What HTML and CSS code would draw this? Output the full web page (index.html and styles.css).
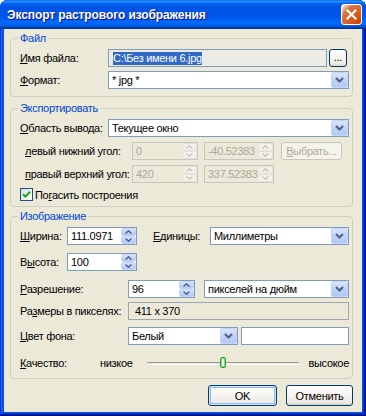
FILE: index.html
```html
<!DOCTYPE html>
<html>
<head>
  <meta charset="UTF-8">
  <title>Экспорт растрового изображения</title>
  <link rel="stylesheet" href="styles.css">
</head>
<body>
  <div class="window">
    <div class="titlebar">
      <span class="title">Экспорт растрового изображения</span>
      <span class="close-btn">
        <svg width="13" height="13" viewBox="0 0 13 13"><path d="M2.5 2.5 L10.5 10.5 M10.5 2.5 L2.5 10.5" stroke="#fff" stroke-width="2.2" stroke-linecap="square"/></svg>
      </span>
    </div>

    <div class="client">
      <!-- File -->
      <fieldset class="group group-file">
        <legend>Файл</legend>
        <div class="row">
          <label class="lbl w88"><u>И</u>мя файла:</label>
          <div class="edit edit-readonly grow"><span class="selection">C:\Без имени 6.jpg</span></div>
          <button class="btn btn-browse">...</button>
        </div>
        <div class="row mt4">
          <label class="lbl w88"><u>Ф</u>ормат:</label>
          <div class="combo grow">
            <span class="combo-text">* jpg *</span>
            <span class="combo-arrow"><svg width="9" height="6" viewBox="0 0 9 6"><path d="M1 1 L4.5 4.5 L8 1" fill="none" stroke="#4D6185" stroke-width="2"/></svg></span>
          </div>
        </div>
      </fieldset>

      <!-- Export area -->
      <fieldset class="group group-export">
        <legend>Экспортировать</legend>
        <div class="row">
          <label class="lbl w88"><u>О</u>бласть вывода:</label>
          <div class="combo grow">
            <span class="combo-text">Текущее окно</span>
            <span class="combo-arrow"><svg width="9" height="6" viewBox="0 0 9 6"><path d="M1 1 L4.5 4.5 L8 1" fill="none" stroke="#4D6185" stroke-width="2"/></svg></span>
          </div>
        </div>
        <div class="row mt5">
          <label class="lbl lbl-indent"><u>л</u>евый нижний угол:</label>
          <div class="spin disabled w66">
            <span class="spin-text">0</span>
            <span class="spin-btns">
              <span class="spin-btn"><svg width="7" height="4" viewBox="0 0 7 4"><path d="M0.5 3.5 L3.5 0.8 L6.5 3.5" fill="none" stroke="currentColor" stroke-width="1.4"/></svg></span>
              <span class="spin-btn"><svg width="7" height="4" viewBox="0 0 7 4"><path d="M0.5 0.5 L3.5 3.2 L6.5 0.5" fill="none" stroke="currentColor" stroke-width="1.4"/></svg></span>
            </span>
          </div>
          <div class="spin disabled w70 ml6">
            <span class="spin-text">-40.52383</span>
            <span class="spin-btns">
              <span class="spin-btn"><svg width="7" height="4" viewBox="0 0 7 4"><path d="M0.5 3.5 L3.5 0.8 L6.5 3.5" fill="none" stroke="currentColor" stroke-width="1.4"/></svg></span>
              <span class="spin-btn"><svg width="7" height="4" viewBox="0 0 7 4"><path d="M0.5 0.5 L3.5 3.2 L6.5 0.5" fill="none" stroke="currentColor" stroke-width="1.4"/></svg></span>
            </span>
          </div>
          <button class="btn btn-disabled btn-pick"><u>В</u>ыбрать...</button>
        </div>
        <div class="row mt5">
          <label class="lbl lbl-indent"><u>п</u>равый верхний угол:</label>
          <div class="spin disabled w66">
            <span class="spin-text">420</span>
            <span class="spin-btns">
              <span class="spin-btn"><svg width="7" height="4" viewBox="0 0 7 4"><path d="M0.5 3.5 L3.5 0.8 L6.5 3.5" fill="none" stroke="currentColor" stroke-width="1.4"/></svg></span>
              <span class="spin-btn"><svg width="7" height="4" viewBox="0 0 7 4"><path d="M0.5 0.5 L3.5 3.2 L6.5 0.5" fill="none" stroke="currentColor" stroke-width="1.4"/></svg></span>
            </span>
          </div>
          <div class="spin disabled w70 ml6">
            <span class="spin-text">337.52383</span>
            <span class="spin-btns">
              <span class="spin-btn"><svg width="7" height="4" viewBox="0 0 7 4"><path d="M0.5 3.5 L3.5 0.8 L6.5 3.5" fill="none" stroke="currentColor" stroke-width="1.4"/></svg></span>
              <span class="spin-btn"><svg width="7" height="4" viewBox="0 0 7 4"><path d="M0.5 0.5 L3.5 3.2 L6.5 0.5" fill="none" stroke="currentColor" stroke-width="1.4"/></svg></span>
            </span>
          </div>
        </div>
        <div class="row row-check mt5">
          <span class="checkbox"><svg width="9" height="9" viewBox="0 0 9 9"><path d="M1 4.2 L3.4 6.6 L8 1.8" fill="none" stroke="#21A121" stroke-width="2"/></svg></span>
          <label class="check-label">По<u>г</u>асить построения</label>
        </div>
      </fieldset>

      <!-- Image -->
      <fieldset class="group group-image">
        <legend>Изображение</legend>
        <div class="row">
          <label class="lbl w47"><u>Ш</u>ирина:</label>
          <div class="spin w70">
            <span class="spin-text">111.0971</span>
            <span class="spin-btns">
              <span class="spin-btn"><svg width="7" height="4" viewBox="0 0 7 4"><path d="M0.5 3.5 L3.5 0.8 L6.5 3.5" fill="none" stroke="currentColor" stroke-width="1.4"/></svg></span>
              <span class="spin-btn"><svg width="7" height="4" viewBox="0 0 7 4"><path d="M0.5 0.5 L3.5 3.2 L6.5 0.5" fill="none" stroke="currentColor" stroke-width="1.4"/></svg></span>
            </span>
          </div>
          <label class="lbl lbl-units w57"><u>Е</u>диницы:</label>
          <div class="combo grow">
            <span class="combo-text">Миллиметры</span>
            <span class="combo-arrow"><svg width="9" height="6" viewBox="0 0 9 6"><path d="M1 1 L4.5 4.5 L8 1" fill="none" stroke="#4D6185" stroke-width="2"/></svg></span>
          </div>
        </div>
        <div class="row mt8">
          <label class="lbl w47">В<u>ы</u>сота:</label>
          <div class="spin w70">
            <span class="spin-text">100</span>
            <span class="spin-btns">
              <span class="spin-btn"><svg width="7" height="4" viewBox="0 0 7 4"><path d="M0.5 3.5 L3.5 0.8 L6.5 3.5" fill="none" stroke="currentColor" stroke-width="1.4"/></svg></span>
              <span class="spin-btn"><svg width="7" height="4" viewBox="0 0 7 4"><path d="M0.5 0.5 L3.5 3.2 L6.5 0.5" fill="none" stroke="currentColor" stroke-width="1.4"/></svg></span>
            </span>
          </div>
        </div>
        <div class="row mt9">
          <label class="lbl w108"><u>Р</u>азрешение:</label>
          <div class="spin w67">
            <span class="spin-text">96</span>
            <span class="spin-btns">
              <span class="spin-btn"><svg width="7" height="4" viewBox="0 0 7 4"><path d="M0.5 3.5 L3.5 0.8 L6.5 3.5" fill="none" stroke="currentColor" stroke-width="1.4"/></svg></span>
              <span class="spin-btn"><svg width="7" height="4" viewBox="0 0 7 4"><path d="M0.5 0.5 L3.5 3.2 L6.5 0.5" fill="none" stroke="currentColor" stroke-width="1.4"/></svg></span>
            </span>
          </div>
          <div class="combo grow ml9">
            <span class="combo-text">пикселей на дюйм</span>
            <span class="combo-arrow"><svg width="9" height="6" viewBox="0 0 9 6"><path d="M1 1 L4.5 4.5 L8 1" fill="none" stroke="#4D6185" stroke-width="2"/></svg></span>
          </div>
        </div>
        <div class="row row-static mt4">
          <label class="lbl w108">Ра<u>з</u>меры в пикселях:</label>
          <div class="static-box grow">411 x 370</div>
        </div>
        <div class="row mt7">
          <label class="lbl w108"><u>Ц</u>вет фона:</label>
          <div class="combo w110">
            <span class="combo-text">Белый</span>
            <span class="combo-arrow"><svg width="9" height="6" viewBox="0 0 9 6"><path d="M1 1 L4.5 4.5 L8 1" fill="none" stroke="#4D6185" stroke-width="2"/></svg></span>
          </div>
          <div class="color-swatch grow"></div>
        </div>
        <div class="row row-quality mt10">
          <label class="lbl w80"><u>К</u>ачество:</label>
          <span class="slider-caption w47">низкое</span>
          <div class="slider">
            <div class="slider-track"></div>
            <div class="slider-thumb" style="left: 48%"></div>
          </div>
          <span class="slider-caption caption-high">высокое</span>
        </div>
      </fieldset>

      <div class="dialog-buttons">
        <button class="btn btn-default btn-ok">OK</button>
        <button class="btn btn-cancel">Отменить</button>
      </div>
    </div>
  </div>
</body>
</html>
```

FILE: styles.css
```css
/* Global styles */
* {
  margin: 0;
  padding: 0;
  box-sizing: border-box;
}

body {
  background-color: #ffffff;
  font-family: "Liberation Sans", Arial, sans-serif;
  font-size: 11px;
  letter-spacing: -0.3px;
  color: #000000;
}

/* Window frame */
.window {
  width: 366px;
  height: 416px;
  display: flex;
  flex-direction: column;
  padding: 0 4px 4px;
  background-color: #0855dd;
  border-radius: 8px 8px 0 0;
  overflow: hidden;
  box-shadow: inset -1px -1px #00138c, inset 1px 1px #0831d9,
    inset -2px -2px #001ea0, inset 2px 2px #166aee,
    inset -3px -3px #003bda, inset 3px 3px #0855dd;
}

.titlebar {
  height: 29px;
  margin: 0 -4px;
  padding: 0 4px 0 7px;
  display: flex;
  align-items: center;
  justify-content: space-between;
  background: linear-gradient(to bottom, #0058ee 0%, #3593ff 4%, #288eff 6%, #127dff 8%,
    #036ffc 10%, #0262ee 14%, #0057e5 20%, #0054e3 24%, #0055eb 56%, #005bf5 66%,
    #026afe 76%, #0062ef 86%, #0052d6 92%, #0040ab 94%, #003092 100%);
}

.title {
  color: #ffffff;
  font-weight: bold;
  font-size: 12px;
  letter-spacing: -0.1px;
  text-shadow: 1px 1px #0f1089;
}

.close-btn {
  width: 21px;
  height: 21px;
  border: 1px solid #ffffff;
  border-radius: 3px;
  display: flex;
  align-items: center;
  justify-content: center;
  background: radial-gradient(circle at 90% 90%, #cc4600 0%, #dc6527 55%, #cd7546 70%, #ffccb2 90%, #ffffff 100%);
}

/* Client area */
.client {
  flex: 1;
  background-color: #ece9d8;
  padding: 2px 9px 0 6px;
  display: flex;
  flex-direction: column;
}

.group {
  border: 1px solid #d0d0bf;
  border-radius: 4px;
  padding: 4px 3px 7px 9px;
}

.group legend {
  color: #0046d5;
  line-height: 14px;
  padding: 0 2px;
  margin-left: -2px;
}

.group-export {
  margin-top: 4px;
  padding-bottom: 5px;
}

.group-image {
  margin-top: 2px;
}

/* Rows */
.row {
  display: flex;
  align-items: center;
  height: 18px;
}

.row-check {
  height: 13px;
}

.row-static {
  height: 18px;
}

.row-quality {
  height: 16px;
}

.mt4 { margin-top: 4px; }
.mt5 { margin-top: 5px; }
.mt7 { margin-top: 7px; }
.mt8 { margin-top: 8px; }
.mt9 { margin-top: 9px; }
.mt10 { margin-top: 10px; }
.ml6 { margin-left: 6px; }
.ml9 { margin-left: 9px; }

.grow { flex: 1; min-width: 0; }
.w47 { width: 47px; flex-shrink: 0; }
.w57 { width: 57px; flex-shrink: 0; }
.w66 { width: 66px; flex-shrink: 0; }
.w67 { width: 67px; flex-shrink: 0; }
.w70 { width: 70px; flex-shrink: 0; }
.w80 { width: 80px; flex-shrink: 0; }
.w88 { width: 88px; flex-shrink: 0; }
.w108 { width: 108px; flex-shrink: 0; }
.w110 { width: 110px; flex-shrink: 0; }

.lbl {
  white-space: nowrap;
}

.lbl-indent {
  margin-left: 5px;
  width: 107px;
  flex-shrink: 0;
}

.lbl-units {
  margin-left: 16px;
}

/* Edit boxes */
.edit,
.combo,
.spin,
.static-box,
.color-swatch {
  height: 100%;
  border: 1px solid #7f9db9;
  background-color: #ffffff;
  display: flex;
  align-items: center;
  white-space: nowrap;
  overflow: hidden;
}

.edit-readonly {
  background-color: #ecebe6;
  padding-left: 4px;
}

.selection {
  background-color: #316ac5;
  color: #ffffff;
  line-height: 13px;
}

.static-box {
  background-color: #ece9d8;
  border-color: #9fa6ae;
  padding-left: 6px;
}

.color-swatch {
  margin-left: 3px;
}

/* Combo boxes */
.combo-text {
  flex: 1;
  padding-left: 3px;
}

.combo-arrow {
  width: 17px;
  height: 100%;
  border: 1px solid #c3d3fd;
  border-radius: 2px;
  background: linear-gradient(to bottom, #dce6fd, #c1d3fb 45%, #b3c8f5);
  display: flex;
  align-items: center;
  justify-content: center;
}

/* Spin boxes */
.spin-text {
  flex: 1;
  padding-left: 3px;
  overflow: hidden;
}

.spin-btns {
  width: 15px;
  height: 100%;
  display: flex;
  flex-direction: column;
}

.spin-btn {
  flex: 1;
  border: 1px solid #c3d3fd;
  border-radius: 2px;
  background: linear-gradient(to bottom, #dce6fd, #c1d3fb 50%, #b3c8f5);
  color: #4d6185;
  display: flex;
  align-items: center;
  justify-content: center;
}

.spin.disabled {
  background-color: #ece9d8;
  border-color: #c9c7ba;
  color: #aca899;
}

.spin.disabled .spin-btn {
  background: #f2f1ea;
  border-color: #e4e2d8;
  color: #c9c7ba;
}

/* Buttons */
.btn {
  font-family: inherit;
  font-size: 11px;
  letter-spacing: inherit;
  color: #000000;
  border: 1px solid #003c74;
  border-radius: 3px;
  background: linear-gradient(to bottom, #ffffff, #f4f3ee 50%, #ecebe6 86%, #d6d0c5);
  cursor: default;
}

.btn-browse {
  width: 18px;
  height: 100%;
  margin: 0 2px;
  line-height: 10px;
  padding-bottom: 2px;
}

.btn-disabled {
  border-color: #c9c7ba;
  background: #f5f4ea;
  color: #aca899;
}

.btn-pick {
  width: 61px;
  height: 100%;
  margin-left: 7px;
}

/* Checkbox */
.checkbox {
  width: 13px;
  height: 13px;
  border: 1px solid #1c5180;
  background: linear-gradient(135deg, #dcdcd7, #ffffff);
  display: flex;
  align-items: center;
  justify-content: center;
}

.check-label {
  margin-left: 2px;
}

/* Quality slider */
.slider-caption {
  white-space: nowrap;
}

.caption-high {
  margin-left: 9px;
}

.slider {
  flex: 1;
  height: 100%;
  position: relative;
  display: flex;
  align-items: center;
}

.slider-track {
  width: 100%;
  height: 3px;
  border-top: 1px solid #9d9c99;
  border-bottom: 1px solid #ffffff;
  background-color: #e8e6dc;
  border-radius: 1px;
}

.slider-thumb {
  position: absolute;
  top: 2px;
  width: 6px;
  height: 11px;
  border: 1px solid #21a121;
  border-radius: 2px;
  background: linear-gradient(to right, #ffffff, #e4f4e4);
  box-shadow: inset 0 0 0 1px #8ed88e;
}

/* Dialog buttons */
.dialog-buttons {
  margin-top: 6px;
  display: flex;
  justify-content: flex-end;
  gap: 9px;
}

.dialog-buttons .btn {
  height: 21px;
}

.btn-ok {
  width: 69px;
}

.btn-cancel {
  width: 67px;
}

.btn-default {
  box-shadow: inset 0 0 0 1px #cee7ff, inset 0 0 0 2px #98b8ea;
}
```
